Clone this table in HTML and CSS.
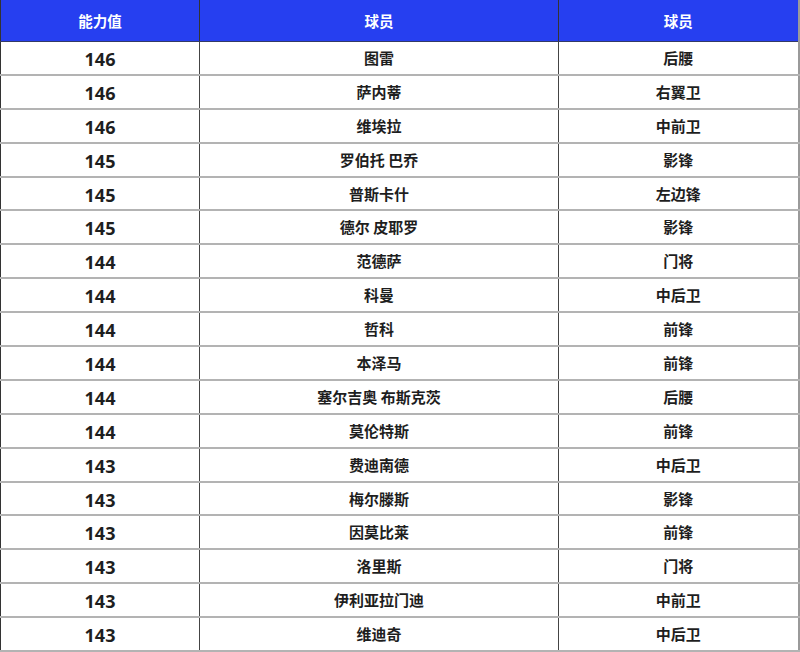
FILE: index.html
```html
<!DOCTYPE html>
<html lang="zh">
<head>
<meta charset="utf-8">
<link rel="stylesheet" href="styles.css">
</head>
<body>
<table class="rank">
  <colgroup><col class="c1"><col class="c2"><col class="c3"></colgroup>
  <thead>
    <tr><th>能力值</th><th>球员</th><th>球员</th></tr>
  </thead>
  <tbody>
    <tr><td class="num">146</td><td>图雷</td><td>后腰</td></tr>
    <tr><td class="num">146</td><td>萨内蒂</td><td>右翼卫</td></tr>
    <tr><td class="num">146</td><td>维埃拉</td><td>中前卫</td></tr>
    <tr><td class="num">145</td><td>罗伯托 巴乔</td><td>影锋</td></tr>
    <tr><td class="num">145</td><td>普斯卡什</td><td>左边锋</td></tr>
    <tr><td class="num">145</td><td>德尔 皮耶罗</td><td>影锋</td></tr>
    <tr><td class="num">144</td><td>范德萨</td><td>门将</td></tr>
    <tr><td class="num">144</td><td>科曼</td><td>中后卫</td></tr>
    <tr><td class="num">144</td><td>哲科</td><td>前锋</td></tr>
    <tr><td class="num">144</td><td>本泽马</td><td>前锋</td></tr>
    <tr><td class="num">144</td><td>塞尔吉奥 布斯克茨</td><td>后腰</td></tr>
    <tr><td class="num">144</td><td>莫伦特斯</td><td>前锋</td></tr>
    <tr><td class="num">143</td><td>费迪南德</td><td>中后卫</td></tr>
    <tr><td class="num">143</td><td>梅尔滕斯</td><td>影锋</td></tr>
    <tr><td class="num">143</td><td>因莫比莱</td><td>前锋</td></tr>
    <tr><td class="num">143</td><td>洛里斯</td><td>门将</td></tr>
    <tr><td class="num">143</td><td>伊利亚拉门迪</td><td>中前卫</td></tr>
    <tr><td class="num">143</td><td>维迪奇</td><td>中后卫</td></tr>
  </tbody>
</table>
</body>
</html>
```

FILE: styles.css
```css
html, body {
  margin: 0;
  padding: 0;
  background: #ffffff;
}

.rank {
  width: 798px;
  border-collapse: collapse;
  table-layout: fixed;
  font-family: "Open Sans", "Noto Sans CJK SC", sans-serif;
  color: #1e1e1e;
  border-left: 1px solid #333333;
  border-right: 2px solid #9a9a9a;
}

.c1 { width: 199px; }
.c2 { width: 359px; }
.c3 { width: 240px; }

.rank th {
  background: #263ff0;
  color: #ffffff;
  height: 41px;
  padding: 0;
  font-size: 14.5px;
  font-weight: 700;
  font-family: "Noto Sans CJK SC", sans-serif;
  text-align: center;
  vertical-align: middle;
  border-bottom: 1px solid #333a66;
  border-right: 1px solid #333333;
}

.rank td {
  height: 31.9px;
  padding: 0;
  line-height: 20px;
  text-align: center;
  vertical-align: middle;
  font-size: 15px;
  font-weight: 700;
  font-family: "Noto Sans CJK SC", sans-serif;
  border-bottom: 2px solid #b3b3b3;
  border-right: 1px solid #444444;
}

.rank td.num {
  font-family: "Open Sans", sans-serif;
  font-size: 18px;
  font-weight: 700;
  height: 29.9px;
  padding-top: 2px;
}
```
